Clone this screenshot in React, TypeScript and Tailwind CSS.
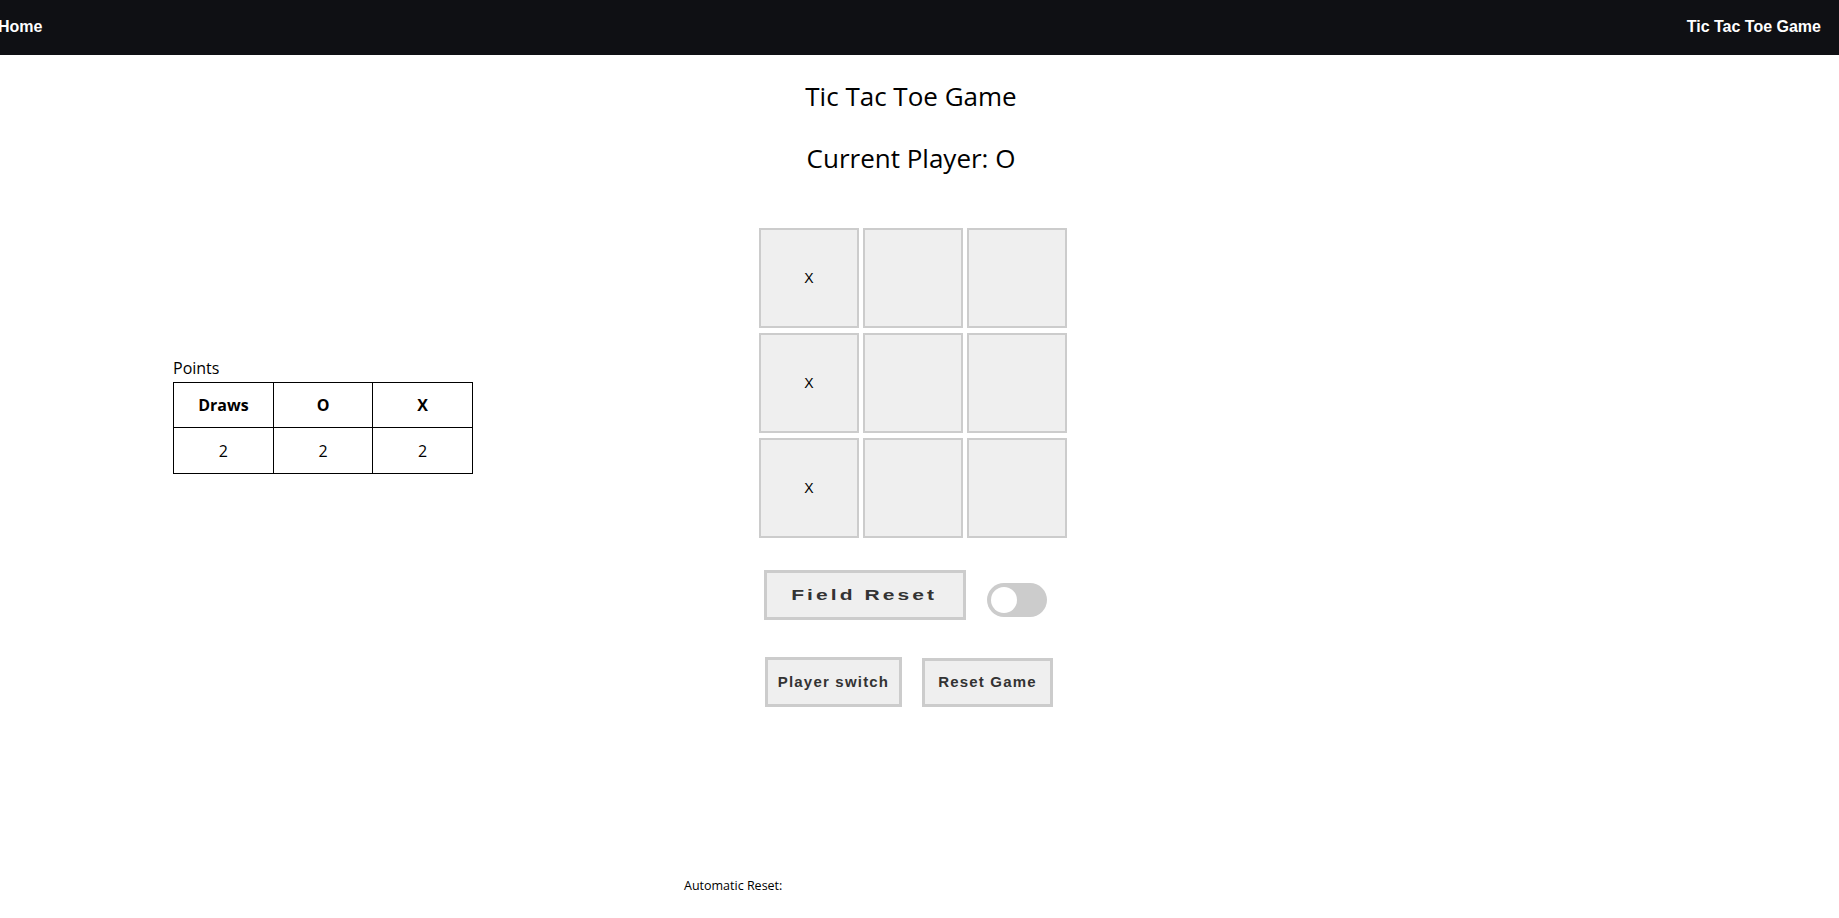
export default function App() {
  const cells = ["X", "", "", "X", "", "", "X", "", ""];

  return (
    <div className="min-h-[918px] bg-white font-['Open_Sans',sans-serif] text-black">
      <nav className="flex h-[55px] items-center justify-between bg-[#0f1014] pb-[1px] font-['Liberation_Sans',sans-serif] text-[16px] font-bold text-white">
        <a className="-ml-[2px]">Home</a>
        <a className="mr-[18px]">Tic Tac Toe Game</a>
      </nav>

      <main className="w-[1822px]">
        <h1 className="pt-[22px] text-center text-[26px] leading-[39px]">Tic Tac Toe Game</h1>
        <h2 className="mt-[23px] text-center text-[26px] leading-[39px]">Current Player: O</h2>

        <div className="mt-[50px] grid grid-cols-[1fr_310px_1fr]">
          <div className="pl-[173px] pt-[128px]">
            <p className="text-[16px] leading-[24px]">Points</p>
            <table className="mt-[2px] w-[300px] border-collapse text-[16px]">
              <thead>
                <tr>
                  <th className="h-[45px] w-[100px] border border-black font-bold">Draws</th>
                  <th className="h-[45px] w-[100px] border border-black font-bold">O</th>
                  <th className="h-[45px] w-[100px] border border-black font-bold">X</th>
                </tr>
              </thead>
              <tbody>
                <tr>
                  <td className="h-[46px] border border-black text-center">2</td>
                  <td className="h-[46px] border border-black text-center">2</td>
                  <td className="h-[46px] border border-black text-center">2</td>
                </tr>
              </tbody>
            </table>
          </div>

          <div className="ml-[3px] grid grid-cols-3 gap-[5px]">
            {cells.map((c, i) => (
              <button
                key={i}
                className="flex h-[100px] w-[100px] items-center justify-center border-2 border-[#ccc] bg-[#efefef] font-['Liberation_Sans',sans-serif] text-[14px] text-black"
              >
                {c}
              </button>
            ))}
          </div>
          <div />
        </div>

        <div className="mt-[32px] flex items-center justify-center gap-[21px] pr-[12px]">
          <button className="h-[50px] w-[202px] border-[3px] border-[#ccc] bg-[#efefef] font-['Liberation_Sans',sans-serif] text-[15px] font-bold text-[#333]">
            <span className="inline-block scale-x-[1.4] tracking-[2.2px]">Field Reset</span>
          </button>
          <div className="mt-[10px] flex h-[34px] w-[60px] items-center rounded-full bg-[#ccc] pl-[4px]">
            <div className="h-[26px] w-[26px] rounded-full bg-white" />
          </div>
        </div>

        <div className="mt-[37px] flex items-start justify-center gap-[20px] pr-[4px]">
          <button className="h-[50px] w-[137px] border-[3px] border-[#ccc] bg-[#efefef] font-['Liberation_Sans',sans-serif] text-[15px] font-bold tracking-[1.2px] text-[#333]">
            Player switch
          </button>
          <button className="mt-[1px] h-[49px] w-[131px] border-[3px] border-[#ccc] bg-[#efefef] font-['Liberation_Sans',sans-serif] text-[15px] font-bold tracking-[1.2px] text-[#333]">
            Reset Game
          </button>
        </div>

        <p className="ml-[684px] mt-[170px] text-[12.5px] leading-[17px]">Automatic Reset:</p>
      </main>
    </div>
  );
}
